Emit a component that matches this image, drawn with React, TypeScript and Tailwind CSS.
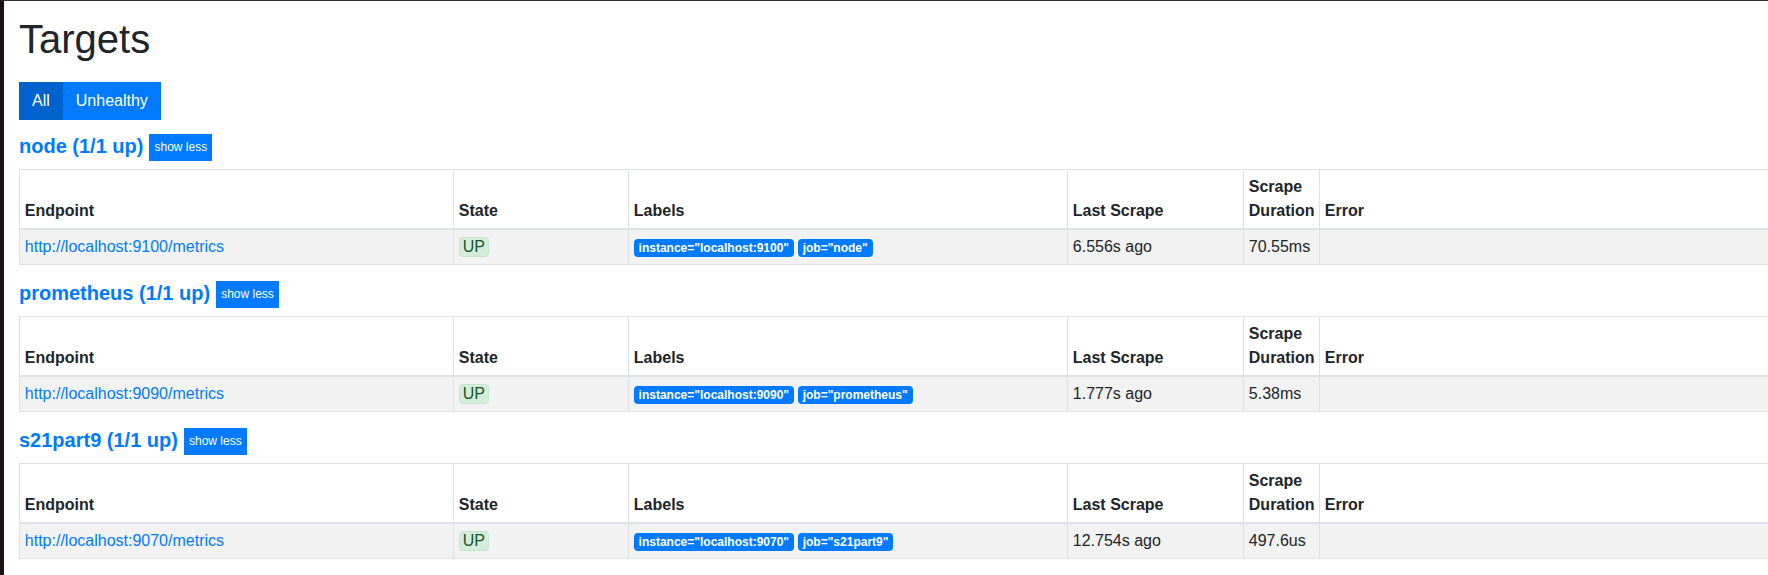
const pools = [
  {
    name: 'node',
    endpoint: 'http://localhost:9100/metrics',
    instance: 'localhost:9100',
    lastScrape: '6.556s ago',
    duration: '70.55ms',
  },
  {
    name: 'prometheus',
    endpoint: 'http://localhost:9090/metrics',
    instance: 'localhost:9090',
    lastScrape: '1.777s ago',
    duration: '5.38ms',
  },
  {
    name: 's21part9',
    endpoint: 'http://localhost:9070/metrics',
    instance: 'localhost:9070',
    lastScrape: '12.754s ago',
    duration: '497.6us',
  },
];

const th = 'border border-[#dee2e6] border-b-2 px-[4.8px] py-[5px] text-left align-bottom font-bold leading-6';
const td = 'border border-[#dee2e6] px-[4.8px] py-[5px] align-top leading-6';

function ScrapePool({ pool }: { pool: (typeof pools)[number] }) {
  return (
    <div className="mb-[16px]">
      <div className="mb-[8px] flex items-start gap-[6px]">
        <a href="#" className="text-[20px] font-bold leading-6 text-[#007bff]">
          {pool.name} (1/1 up)
        </a>
        <button className="bg-[#007bff] px-[5px] py-[4px] text-[12px] leading-[19px] text-white">
          show less
        </button>
      </div>

      <table className="w-[1790px] table-fixed border-collapse">
        <thead>
          <tr>
            <th className={`${th} w-[434px]`}>Endpoint</th>
            <th className={`${th} w-[175px]`}>State</th>
            <th className={`${th} w-[439px]`}>Labels</th>
            <th className={`${th} w-[176px]`}>Last Scrape</th>
            <th className={`${th} w-[76px]`}>Scrape Duration</th>
            <th className={th}>Error</th>
          </tr>
        </thead>
        <tbody>
          <tr className="bg-[#f2f2f2]">
            <td className={td}>
              <a href="#" className="text-[#007bff]">
                {pool.endpoint}
              </a>
            </td>
            <td className={td}>
              <div className="flex h-6 items-center">
                <span className="rounded-[4px] border border-[#c3e6cb] bg-[#d4edda] px-[3px] leading-[18px] text-[#155724]">
                  UP
                </span>
              </div>
            </td>
            <td className={td}>
              <div className="flex h-6 items-center gap-[4px] pt-[1px]">
                <span className="rounded-[4px] bg-[#007bff] px-[4.8px] py-[3px] text-[12px] font-bold leading-3 text-white">
                  instance="{pool.instance}"
                </span>
                <span className="rounded-[4px] bg-[#007bff] px-[4.8px] py-[3px] text-[12px] font-bold leading-3 text-white">
                  job="{pool.name}"
                </span>
              </div>
            </td>
            <td className={td}>{pool.lastScrape}</td>
            <td className={td}>{pool.duration}</td>
            <td className={td}></td>
          </tr>
        </tbody>
      </table>
    </div>
  );
}

export default function App() {
  return (
    <div className="min-h-[575px] overflow-hidden border-l-4 border-t border-l-[#1a1214] border-t-[#2b3035] bg-white pl-[15px] pt-[14px] font-['Liberation_Sans',Arial,sans-serif] text-[16px] text-[#212529]">
      <h1 className="mb-[19px] text-[40px] leading-[48px]">Targets</h1>

      <div className="mb-[14px] flex">
        <button className="bg-[#0062cc] px-[13px] py-[7px] leading-6 text-white">All</button>
        <button className="bg-[#007bff] px-[13px] py-[7px] leading-6 text-white">Unhealthy</button>
      </div>

      {pools.map((pool) => (
        <ScrapePool key={pool.name} pool={pool} />
      ))}
    </div>
  );
}
